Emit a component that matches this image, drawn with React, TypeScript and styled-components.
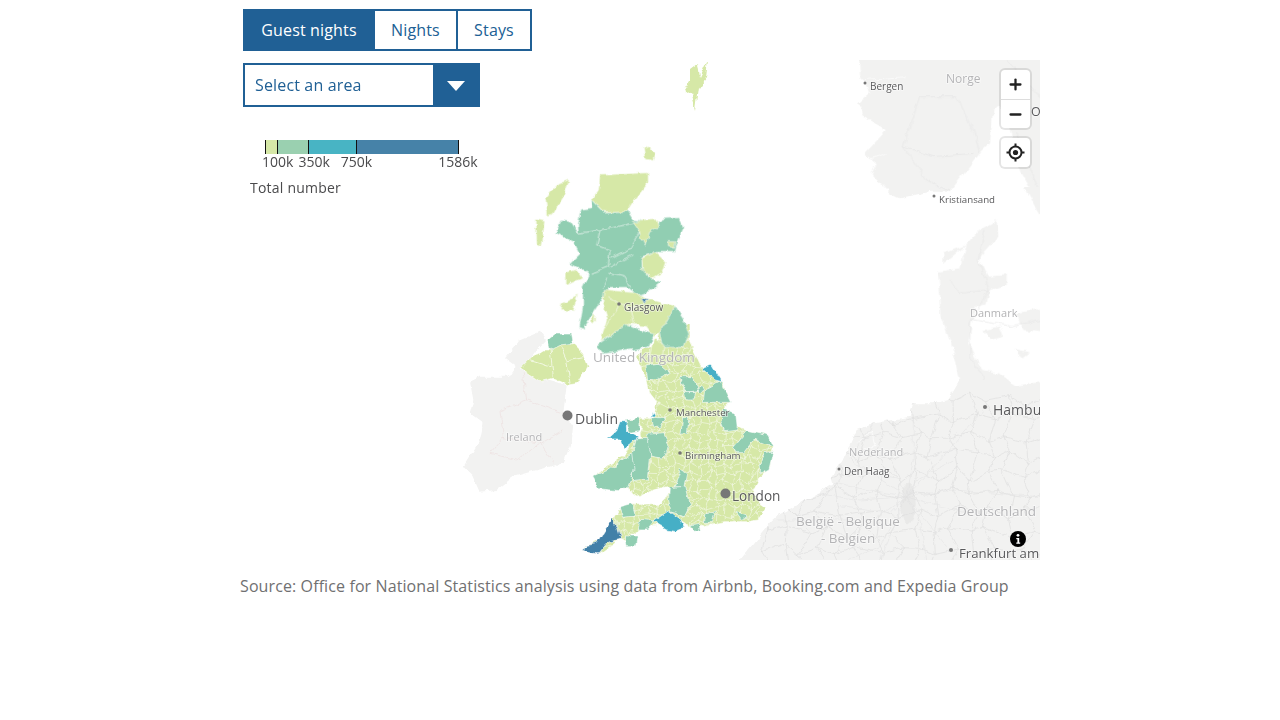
import React from 'react'
import styled, { createGlobalStyle } from 'styled-components'
import { Plus, Minus } from 'lucide-react'

const GlobalStyle = createGlobalStyle`
  body {
    margin: 0;
    background: #fff;
    font-family: 'Open Sans', 'Liberation Sans', sans-serif;
  }
`

const BLUE = '#206095'
const LIGHT = '#d6e8a7'
const TEAL = '#91ceb2'
const CYAN = '#46afc6'
const DARK = '#4280a8'
const LAND = '#f2f2f1'

const Page = styled.div`
  width: 800px;
  margin: 0 auto;
  padding-top: 9px;
`

const Tabs = styled.div`
  display: flex;
  margin-left: 3px;
  height: 42px;
`

const Tab = styled.button<{ $active?: boolean; $width: number }>`
  width: ${p => p.$width}px;
  margin-right: -2px;
  padding: 0;
  border: 2px solid ${BLUE};
  background: ${p => (p.$active ? BLUE : '#fff')};
  color: ${p => (p.$active ? '#fff' : BLUE)};
  font: 16px 'Open Sans', sans-serif;
  letter-spacing: 0.15px;
`

const MapFrame = styled.div`
  position: relative;
  height: 500px;
  margin-top: 9px;
  overflow: hidden;
`

const MapSvg = styled.svg`
  display: block;
  width: 800px;
  height: 500px;
`

const Overlay = styled.div`
  position: absolute;
  top: 3px;
  left: 3px;
  width: 240px;
  display: flex;
  flex-direction: column;
`

const Select = styled.div`
  display: flex;
  width: 237px;
  height: 44px;
  box-sizing: border-box;
  border: 2px solid ${BLUE};
  background: #fff;
`

const SelectText = styled.span`
  flex: 1;
  padding-left: 10px;
  line-height: 40px;
  font-size: 16px;
  letter-spacing: 0.15px;
  color: ${BLUE};
`

const SelectArrow = styled.span`
  width: 45px;
  display: flex;
  align-items: center;
  justify-content: center;
  background: ${BLUE};

  &::after {
    content: '';
    border-left: 9px solid transparent;
    border-right: 9px solid transparent;
    border-top: 10px solid #fff;
    margin-top: 2px;
  }
`

const Legend = styled.div`
  margin-top: 33px;
  color: #4a4a4c;
  font-size: 14px;
`

const LegendBar = styled.div`
  display: flex;
  margin-left: 22px;
  height: 14px;
  width: 195px;
`

const LegendStep = styled.span<{ $color: string; $width: number }>`
  width: ${p => p.$width}px;
  background: ${p => p.$color};
  border-left: 1px solid #111;
  box-sizing: border-box;
`

const LegendEnd = styled.span`
  width: 1px;
  background: #111;
`

const LegendLabels = styled.div`
  display: flex;
  margin-left: 19px;
  height: 18px;
  line-height: 16px;
  white-space: nowrap;
`

const LegendLabel = styled.span<{ $gap: number }>`
  margin-left: ${p => p.$gap}px;
`

const LegendTitle = styled.div`
  margin: 6px 0 0 7px;
  line-height: 19px;
  letter-spacing: 0.22px;
`

const Controls = styled.div`
  position: absolute;
  top: 10px;
  right: 10px;
  display: flex;
  flex-direction: column;
  gap: 10px;
`

const ControlGroup = styled.div`
  width: 29px;
  display: flex;
  flex-direction: column;
  background: #fff;
  border-radius: 4px;
  box-shadow: 0 0 0 2px rgba(0, 0, 0, 0.1);
`

const ControlButton = styled.button`
  width: 29px;
  height: 29px;
  padding: 0;
  display: flex;
  align-items: center;
  justify-content: center;
  border: 0;
  background: transparent;
  color: #222;

  & + & {
    border-top: 1px solid #ddd;
  }
`

const InfoBadge = styled.div`
  position: absolute;
  right: 14px;
  bottom: 14px;
  width: 16px;
  height: 16px;
`

const Source = styled.p`
  margin: 16px 0 0;
  font-size: 16px;
  line-height: 20px;
  letter-spacing: 0.105px;
  color: #707071;
`

const MapLabel = styled.text<{ $size: number; $muted?: boolean }>`
  font-family: 'Open Sans', sans-serif;
  font-size: ${p => p.$size}px;
  fill: ${p => (p.$muted ? '#b4b4b6' : '#59595b')};
  stroke: rgba(255, 255, 255, 0.55);
  stroke-width: 1.5px;
  paint-order: stroke;
`

const Dot = styled.circle`
  fill: #777;
`

const Region = styled.polygon<{ $fill: string }>`
  fill: ${p => p.$fill};
  stroke: #fff;
  stroke-width: 1.8;
  stroke-linejoin: round;
`

const Land = styled.polygon`
  fill: ${LAND};
`

const Road = styled.polyline<{ $pink?: boolean }>`
  fill: none;
  stroke: ${p => (p.$pink ? '#eddfdf' : '#e6e6e6')};
  stroke-width: 2;
`

const Boundary = styled.polyline`
  fill: none;
  stroke: #fff;
  stroke-width: 2;
`

// jittered grid, stands in for the small districts and the road network
const jitterMesh = (x0: number, y0: number, cell: number, cols: number, rows: number, amp: number) => {
  const jitter = (a: number, b: number) => (Math.sin(a * 12.9898 + b * 78.233) * 43758.5453) % 1
  const node = (i: number, j: number) => {
    const x = x0 + i * cell + jitter(i, j) * amp
    const y = y0 + j * cell + jitter(j + 7, i + 3) * amp
    return `${x.toFixed(1)} ${y.toFixed(1)}`
  }
  let d = ''
  for (let i = 0; i < cols; i++) {
    for (let j = 0; j < rows; j++) {
      d += `M${node(i, j)}L${node(i + 1, j)}M${node(i, j)}L${node(i, j + 1)}`
    }
  }
  return d
}

const districtMesh = jitterMesh(370, -20, 25, 25, 30, 11)
const roadMesh = jitterMesh(80, 60, 56, 16, 10, 24)

const ENGLAND =
  '530,85 545,60 590,40 600,-20 690,-20 690,35 720,100 785,155 810,215 790,235 830,290 865,305 920,315 940,350 930,410 900,440 880,480 900,520 920,535 895,570 860,575 790,575 720,590 700,600 655,570 640,600 590,585 555,590 510,620 515,645 480,625 420,670 370,665 375,650 420,630 460,570 480,535 510,525 600,520 640,480 620,470 580,480 540,500 500,470 480,480 420,475 400,440 450,405 490,380 515,340 545,320 540,290 505,265 580,265 590,215 570,190 560,150 545,120'

const ENGLAND_REGIONS: [string, string][] = [
  ['558,108 597,103 628,130 592,148 563,152', TEAL],
  ['658,143 702,143 712,182 680,187', TEAL],
  ['673,185 707,185 702,210 678,210', TEAL],
  ['712,172 725,170 732,186 718,188', TEAL],
  ['738,175 780,153 812,217 775,217 733,217', TEAL],
  ['725,115 755,102 787,155 765,150', CYAN],
  ['788,238 827,248 832,297 795,302 783,275', TEAL],
  ['668,263 687,263 682,312 663,312', TEAL],
  ['573,263 617,263 602,292 583,292', TEAL],
  ['495,268 537,263 537,302 510,307', TEAL],
  ['480,275 498,275 500,300 537,320 510,347 490,357 480,327 443,327 470,303', CYAN],
  ['530,323 567,323 572,350 562,447 518,452 513,370 523,350', TEAL],
  ['563,313 612,308 627,345 607,387 573,382 563,350', TEAL],
  ['398,440 450,418 515,368 522,420 502,472 480,482 418,477', TEAL],
  ['628,473 677,468 690,520 672,557 633,547 626,510', TEAL],
  ['663,418 680,428 672,470 643,470', TEAL],
  ['625,543 662,570 672,592 645,602 620,597 578,575', CYAN],
  ['478,533 517,523 527,557 488,562', TEAL],
  ['493,618 532,618 527,647 498,647', TEAL],
  ['543,568 582,573 562,597 538,597', TEAL],
  ['690,588 717,583 722,602 700,604', TEAL],
  ['738,548 767,543 757,577 733,577', TEAL],
  ['828,548 862,558 845,572', TEAL],
  ['818,352 860,303 927,318 942,352 882,328 852,368 828,368', TEAL],
  ['913,368 940,363 927,417 898,432 898,405', TEAL],
  ['458,565 472,590 482,625 442,635 412,672 388,668 366,660 385,646 412,640', DARK],
  ['578,243 587,258 576,258', CYAN]
]

const ULSTER: [string, string][] = [
  ['262,30 285,12 335,12 340,45 370,75 382,110 355,160 325,165 280,145 240,155 180,115 210,85 250,60 270,60', LIGHT],
  ['262,30 285,12 335,12 340,40 300,45 270,60', TEAL]
]

const SCOTLAND: [string, string][] = [
  ['240,135 385,128 385,160 340,215 320,245 250,245 215,210 235,180', LIGHT],
  ['370,55 385,50 408,70 402,92 375,88', LIGHT],
  ['148,148 137,190 100,252 83,257 76,205 110,163', LIGHT],
  ['48,268 74,273 67,347 50,342', LIGHT],
  [
    '213,208 250,246 325,243 340,268 410,278 430,266 477,263 490,290 472,330 462,367 410,367 367,380 367,410 382,438 422,458 392,482 350,497 320,472 270,472 252,500 217,552 192,597 178,592 188,530 188,470 208,430 148,400 178,370 163,340 106,308 125,268 152,273 175,308 173,285 183,238 218,233',
    TEAL
  ],
  ['340,275 410,268 415,290 385,310 375,345 355,300', LIGHT],
  ['365,385 405,365 437,395 427,427 395,447 368,420', LIGHT],
  ['445,335 465,335 460,355 445,350', LIGHT],
  ['138,428 167,418 187,445 138,467', LIGHT],
  ['213,548 232,570 220,582', LIGHT],
  ['177,493 160,542 123,542 128,520', LIGHT],
  ['253,478 340,488 390,508 467,528 422,602 400,622 380,590 330,582 238,637 263,570 248,520', LIGHT],
  ['465,528 492,570 507,610 492,652 428,652 418,605', TEAL],
  ['228,647 320,583 402,610 382,652 248,672', TEAL],
  ['400,625 432,645 427,680 388,680', LIGHT],
  ['360,503 387,508 372,524', DARK]
]

const SCOTLAND_LINES = [
  '175,310 240,300 340,280',
  '240,300 230,345 270,360 265,410 215,430',
  '360,305 330,355 270,385',
  '340,375 290,400 270,410',
  '265,430 310,440 330,470',
  '260,440 250,470',
  '265,500 330,540 390,510',
  '330,540 340,580',
  '300,520 260,590'
]

const HUB = '500,350'
const BENELUX_ROADS = [
  `${HUB} 280,310`, `${HUB} 330,240 400,130`, `${HUB} 520,240 520,110`, `${HUB} 600,240 730,90`,
  `${HUB} 640,330 900,350`, `${HUB} 620,500`, `${HUB} 400,420 110,420`, `${HUB} 360,360 230,340`,
  `${HUB} 420,500 320,540`, `${HUB} 480,300 350,270`, `${HUB} 530,300 640,240`, `${HUB} 540,420 560,540`,
  `${HUB} 450,400 300,380`, `${HUB} 470,420 420,540`, `${HUB} 560,370 700,400`
]

const BENELUX = '-30,580 0,540 90,430 110,410 230,340 280,310 275,290 310,240 350,150 400,130 510,110 520,70 590,70 625,60 660,0 790,0 820,25 930,25 930,580'

const GeolocateIcon = () => (
  <svg width="21" height="21" viewBox="0 0 21 21">
    <circle cx="10.5" cy="10.5" r="6" fill="none" stroke="#222" strokeWidth="2" />
    <circle cx="10.5" cy="10.5" r="2.6" fill="#222" />
    <path d="M10.5 1.5v3M10.5 16.5v3M1.5 10.5h3M16.5 10.5h3" stroke="#222" strokeWidth="2" />
  </svg>
)

const InfoIcon = () => (
  <svg width="16" height="16" viewBox="0 0 16 16">
    <circle cx="8" cy="8" r="8" fill="#000" />
    <circle cx="8" cy="4.3" r="1.4" fill="#fff" />
    <path d="M6.3 7h2.9v4.6h1v1.2H6.3v-1.2h1.1V8.2H6.3z" fill="#fff" />
  </svg>
)

const BaseLand = () => (
  <g filter="url(#rough)">
    <g transform="translate(460 330) scale(0.3333)">
      <Land points="240,5 180,30 135,85 170,110 150,140 60,140 30,155 40,210 30,250 70,280 60,330 10,410 40,440 60,485 110,480 160,440 230,420 310,400 335,340 340,280 310,250 320,165 270,150 240,130 180,120 230,60 258,30" />
      <Road $pink points="190,130 200,210 120,240 130,320 90,370 170,390 240,340 310,300" />
      <Road $pink points="200,210 310,250" />
      <Road $pink points="130,320 240,340 280,400" />
    </g>
    <g transform="translate(850 60) scale(0.3333)">
      <Land points="25,-30 30,40 60,100 25,130 40,170 110,210 45,280 80,310 65,340 120,400 150,415 240,395 300,395 390,280 420,250 430,150 450,140 480,210 510,330 560,420 600,450 600,-30" />
      <Boundary points="20,60 170,50" />
      <Boundary points="50,300 110,280" />
      <Road points="185,180 210,110 320,110 370,210 390,280" />
      <Road points="185,180 160,260 230,360 300,395" />
      <Road points="160,260 250,290 370,280" />
      <Road points="470,0 570,110" />
      <Road points="500,220 570,400" />
    </g>
    <g transform="translate(900 190) scale(0.3333)">
      <Land points="290,90 295,140 250,190 235,210 265,260 320,255 320,285 270,300 260,340 225,350 215,400 205,460 225,500 250,540 300,550 350,590 450,570 450,660 150,660 180,570 165,500 125,380 115,245 180,235 200,165 130,220 130,190 200,165 240,120" />
      <Land points="250,420 300,410 310,440 270,450" />
      <Land points="350,370 450,350 450,430 370,420" />
      <Land points="340,480 390,490 370,505" />
      <Land points="370,-10 450,-10 450,130" />
      <Road points="255,120 235,210 265,300 180,310 150,270" />
      <Road points="265,300 210,400 210,500 250,560 260,640" />
      <Road points="220,390 340,410 450,380" />
    </g>
    <g transform="translate(740 380) scale(0.3333)">
      <clipPath id="benelux">
        <polygon points={BENELUX} />
      </clipPath>
      <Land points={BENELUX} />
      <Boundary points="355,190 395,150 405,200 370,210" />
      <path d={roadMesh} clipPath="url(#benelux)" fill="none" stroke="#dedede" strokeWidth="2" />
      {BENELUX_ROADS.map(points => (
        <Road key={points} points={points} />
      ))}
      <ellipse cx="505" cy="370" rx="22" ry="60" fill="#dcdcdc" opacity="0.4" />
    </g>
  </g>
)

const Choropleth = () => (
  <g filter="url(#rough)">
    <g transform="translate(460 330) scale(0.3333)">
      {ULSTER.map(([points, fill]) => (
        <Region key={points} points={points} $fill={fill} />
      ))}
      <Boundary points="270,60 280,140" />
      <Boundary points="205,90 270,110" />
      <Boundary points="300,45 320,90 370,80" />
      <Boundary points="320,90 330,160" />
      <clipPath id="england">
        <polygon points={ENGLAND} />
      </clipPath>
      <Region points={ENGLAND} $fill={LIGHT} />
      <path d={districtMesh} clipPath="url(#england)" fill="none" stroke="#fff" strokeWidth="1.7" opacity="0.85" />
      {ENGLAND_REGIONS.map(([points, fill]) => (
        <Region key={points} points={points} $fill={fill} />
      ))}
    </g>
    <g transform="translate(520 130) scale(0.3333)">
      {SCOTLAND.map(([points, fill]) => (
        <Region key={points} points={points} $fill={fill} />
      ))}
      {SCOTLAND_LINES.map(points => (
        <Boundary key={points} points={points} />
      ))}
    </g>
    <polygon
      points="690,70 698,64 700,78 708,60 706,78 699,88 696,110 692,95 685,90 690,82"
      fill={LIGHT}
    />
  </g>
)

const Labels = () => (
  <>
    <MapLabel $size={12} $muted x="946" y="83">Norge</MapLabel>
    <Dot cx="865" cy="83" r="1.5" />
    <MapLabel $size={10} x="870" y="90">Bergen</MapLabel>
    <Dot cx="934" cy="196" r="1.5" />
    <MapLabel $size={9.7} x="939" y="203">Kristiansand</MapLabel>
    <MapLabel $size={12.5} x="1031" y="116">Oslo</MapLabel>
    <MapLabel $size={11} $muted x="970" y="317">Danmark</MapLabel>
    <Dot cx="985" cy="407" r="2" />
    <MapLabel $size={14} x="993" y="415">Hamburg</MapLabel>
    <MapLabel $size={11} $muted x="849" y="456">Nederland</MapLabel>
    <Dot cx="839" cy="469" r="1.5" />
    <MapLabel $size={10} x="844" y="475">Den Haag</MapLabel>
    <MapLabel $size={13.5} $muted x="796" y="526">België - Belgique</MapLabel>
    <MapLabel $size={13.5} $muted x="821" y="543">- Belgien</MapLabel>
    <MapLabel $size={13.5} $muted x="957" y="516">Deutschland</MapLabel>
    <Dot cx="951" cy="550" r="2" />
    <MapLabel $size={13.2} x="959" y="558">Frankfurt am Main</MapLabel>
    <MapLabel $size={11} $muted x="506" y="441">Ireland</MapLabel>
    <Dot cx="567.5" cy="415.5" r="5" />
    <MapLabel $size={14} x="575" y="424">Dublin</MapLabel>
    <MapLabel $size={13.5} $muted x="593" y="362">United Kingdom</MapLabel>
    <Dot cx="619" cy="304" r="1.8" />
    <MapLabel $size={10} x="624" y="311">Glasgow</MapLabel>
    <Dot cx="670" cy="410" r="1.8" />
    <MapLabel $size={9.7} x="676" y="416">Manchester</MapLabel>
    <Dot cx="680" cy="453" r="1.8" />
    <MapLabel $size={9.7} x="685" y="459">Birmingham</MapLabel>
    <Dot cx="725.5" cy="493.5" r="5" />
    <MapLabel $size={13.6} x="732" y="501">London</MapLabel>
  </>
)

const App = () => (
  <>
    <GlobalStyle />
    <Page>
      <Tabs>
        <Tab $active $width={132}>Guest nights</Tab>
        <Tab $width={85}>Nights</Tab>
        <Tab $width={76}>Stays</Tab>
      </Tabs>
      <MapFrame>
        <MapSvg viewBox="240 60 800 500">
          <defs>
            <filter id="rough" x="-5%" y="-5%" width="110%" height="110%" colorInterpolationFilters="sRGB">
              <feTurbulence type="fractalNoise" baseFrequency="0.11" numOctaves="3" seed="4" result="noise" />
              <feDisplacementMap in="SourceGraphic" in2="noise" scale="6" xChannelSelector="R" yChannelSelector="G" />
            </filter>
          </defs>
          <BaseLand />
          <Choropleth />
          <Labels />
        </MapSvg>
        <Overlay>
          <Select>
            <SelectText>Select an area</SelectText>
            <SelectArrow />
          </Select>
          <Legend>
            <LegendBar>
              <LegendStep $color="#d6e8a7" $width={12} />
              <LegendStep $color="#9ad0b0" $width={31} />
              <LegendStep $color="#48b4c4" $width={48} />
              <LegendStep $color="#4682a8" $width={102} />
              <LegendEnd />
            </LegendBar>
            <LegendLabels>
              <LegendLabel $gap={0}>100k</LegendLabel>
              <LegendLabel $gap={5}>350k</LegendLabel>
              <LegendLabel $gap={11}>750k</LegendLabel>
              <LegendLabel $gap={66}>1586k</LegendLabel>
            </LegendLabels>
            <LegendTitle>Total number</LegendTitle>
          </Legend>
        </Overlay>
        <Controls>
          <ControlGroup>
            <ControlButton><Plus size={17} strokeWidth={3.2} /></ControlButton>
            <ControlButton><Minus size={17} strokeWidth={3.2} /></ControlButton>
          </ControlGroup>
          <ControlGroup>
            <ControlButton><GeolocateIcon /></ControlButton>
          </ControlGroup>
        </Controls>
        <InfoBadge><InfoIcon /></InfoBadge>
      </MapFrame>
      <Source>Source: Office for National Statistics analysis using data from Airbnb, Booking.com and Expedia Group</Source>
    </Page>
  </>
)

export default App
